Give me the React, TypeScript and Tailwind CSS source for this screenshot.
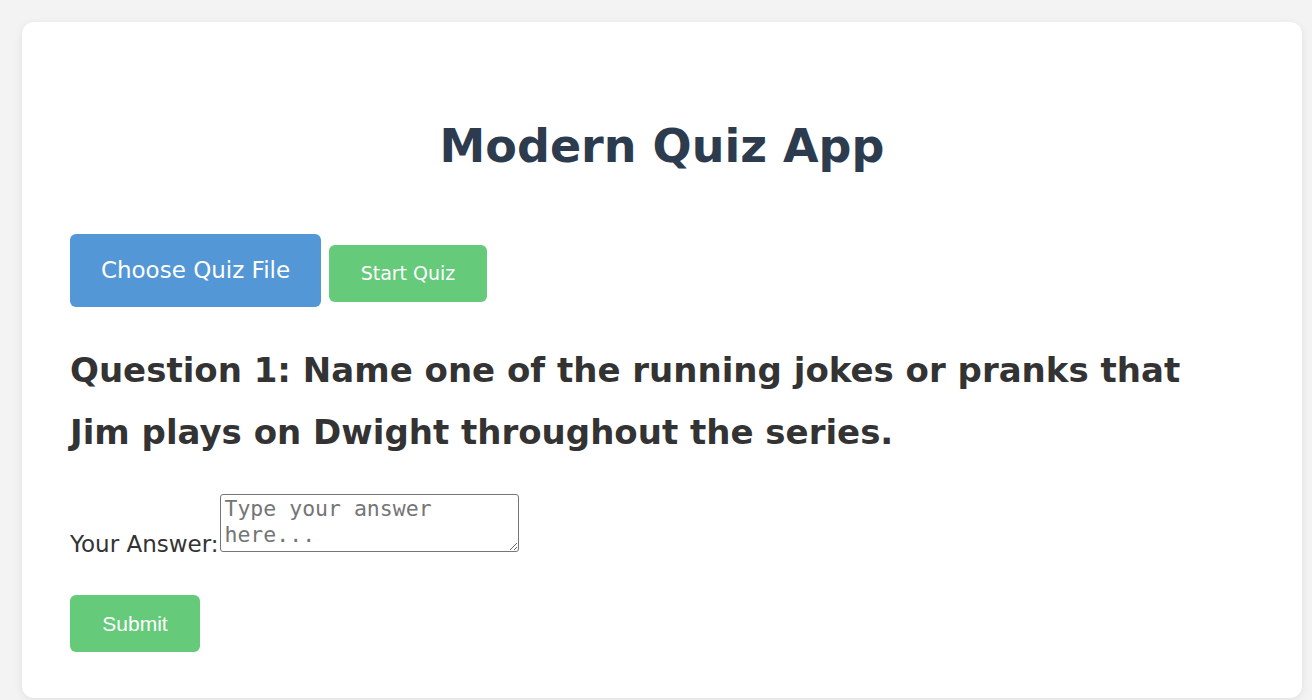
import React, { useState } from "react";

const font = { fontFamily: '"DejaVu Sans", Verdana, sans-serif' };

const App = () => {
  const [answer, setAnswer] = useState("");

  return (
    <div className="min-h-[700px] w-full bg-[#f3f3f3] pt-[22px] pl-[22px]">
      <div
        className="h-[676px] w-[1280px] rounded-xl bg-white px-12 pt-[94px] pb-12 shadow-[0_2px_8px_rgba(0,0,0,0.08)]"
        style={font}
      >
        <h1 className="text-center text-[46px] font-bold leading-[60px] text-[#2d3b4e]">
          Modern Quiz App
        </h1>

        <div className="mt-[58px] flex items-center gap-2">
          <button className="h-[73px] w-[251px] rounded-md bg-[#5397d6] text-[23px] text-white">
            Choose Quiz File
          </button>
          <button className="mt-[6px] h-[57px] w-[158px] rounded-md bg-[#65ca7a] text-[19px] text-white">
            Start Quiz
          </button>
        </div>

        <h2 className="mt-[32px] max-w-[1140px] text-[34px] font-bold leading-[62px] text-[#333333]">
          Question 1: Name one of the running jokes or pranks that Jim plays on
          Dwight throughout the series.
        </h2>

        <div className="mt-[31px] flex items-end text-[23px] text-[#333333]">
          <label htmlFor="answer" className="mb-[-5px] leading-[26px]">
            Your Answer:
          </label>
          <textarea
            id="answer"
            value={answer}
            onChange={(e) => setAnswer(e.target.value)}
            placeholder="Type your answer here..."
            className="ml-[2px] h-[58px] w-[299px] rounded-[3px] border border-[#767676] px-[3px] py-[1px] text-[21.5px] leading-[26px] placeholder:text-[#757575]"
            style={{ fontFamily: '"DejaVu Sans Mono", monospace' }}
          />
        </div>

        <button
          className="mt-[43px] h-[57px] w-[130px] rounded-md bg-[#65ca7a] text-[21px] text-white"
          style={{ fontFamily: '"Liberation Sans", Arial, sans-serif' }}
        >
          Submit
        </button>
      </div>
    </div>
  );
};

export default App;
